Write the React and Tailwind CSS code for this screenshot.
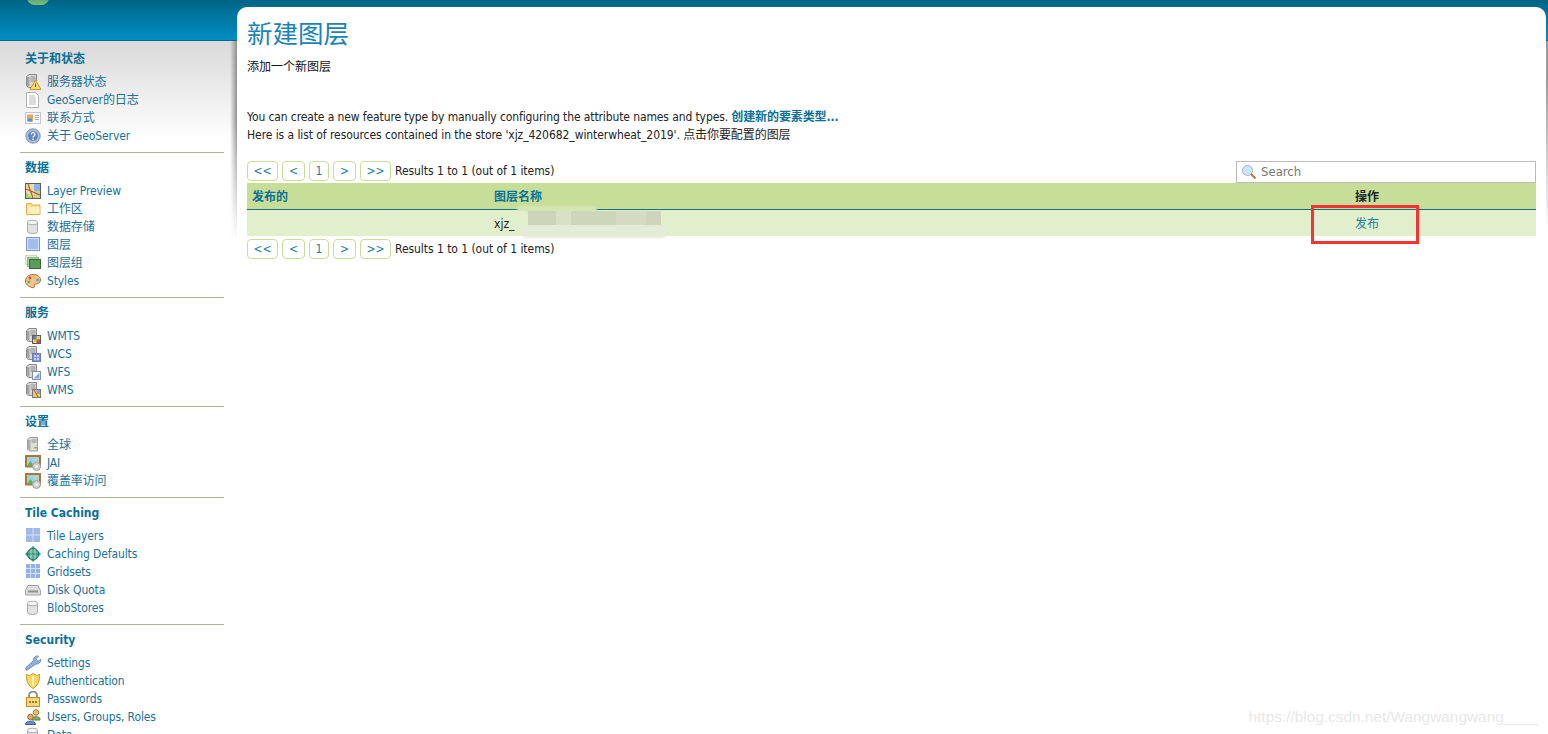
import React from 'react';

const FONT = 'font-["DejaVu_Sans_Condensed","Noto_Sans_CJK_SC",sans-serif]';

// --- little 16px icons ---
function Svg({ children }) {
  return <svg width="16" height="16" viewBox="0 0 16 16" className="shrink-0">{children}</svg>;
}

const Server = () => (
  <g>
    <path d="M1.5 2.5 4 .5h7.5v13h-8l-2-1.500z" fill="#dadada" stroke="#8a8a8a" />
    <path d="M2 3h2.5v10L2 11.500z" fill="#a4a4a4" />
    <path d="M5.500 3h5M5.500 5h5M5.500 7h5" stroke="#8d8d8d" />
  </g>
);

const ICONS = {
  status: (
    <Svg>
      <Server />
      <path d="M10.5 6 L16 15.5 H5 Z" fill="#fbd96b" stroke="#c79a2c" />
      <path d="M10.5 9.5v3.5" stroke="#7a4d00" />
    </Svg>
  ),
  log: (
    <Svg>
      <path d="M1.5.5h9l3 3v12h-12z" fill="#fff" stroke="#b0b0b0" />
      <path d="M4 4h6M4 6h7M4 8h7M4 10h7M4 12h7" stroke="#b8b8b8" />
    </Svg>
  ),
  contact: (
    <Svg>
      <rect x="0.5" y="2.5" width="15" height="11" fill="#f4f6fa" stroke="#c2c8d2" />
      <rect x="2" y="4.5" width="6" height="7" fill="#e4a868" />
      <rect x="3" y="8.5" width="4" height="3" fill="#5a8ed0" />
      <path d="M10 5.5h4M10 7.5h4M10 9.5h4" stroke="#a6adb8" />
    </Svg>
  ),
  about: (
    <Svg>
      <circle cx="8" cy="8" r="7.2" fill="#a5bde0" stroke="#7d98c4" />
      <circle cx="8" cy="8" r="4.8" fill="#5f83c0" />
      <path d="M6.3 6.5a1.8 1.8 0 1 1 2.6 1.6c-.6.3-.9.6-.9 1.3M8 10.6v1.4" stroke="#fff" strokeWidth="1.3" fill="none" />
    </Svg>
  ),
  preview: (
    <Svg>
      <rect x="0.5" y="0.5" width="15" height="15" fill="#dfe6a4" stroke="#5c5c5c" />
      <path d="M9 1h6v7H9z" fill="#8fb2ea" />
      <path d="M1 9l6 6H1z" fill="#a7cf7a" />
      <path d="M9 8h6v7H9z" fill="#bcd98a" />
      <path d="M3 1l5 14M1 6l14 6" stroke="#d8433a" strokeWidth="1.2" />
    </Svg>
  ),
  folder: (
    <Svg>
      <path d="M1.5 2.5h5l1 1.5h7.5v9.5H1.5z" fill="#fbe08a" stroke="#e0ad50" />
      <path d="M2.5 6h12v7h-12z" fill="#fdf0bd" />
    </Svg>
  ),
  store: (
    <Svg>
      <path d="M2.5 3.5v9c0 2.6 10 2.6 10 0v-9" fill="#e2e2e2" stroke="#a8a8a8" />
      <ellipse cx="7.5" cy="3.5" rx="5" ry="2.2" fill="#f6f6f6" stroke="#a8a8a8" />
    </Svg>
  ),
  layer: (
    <Svg>
      <rect x="1.5" y="0.5" width="13" height="13" fill="#a3bdea" stroke="#8196c0" />
      <rect x="2.5" y="1.5" width="11" height="11" fill="none" stroke="#d4dff3" />
    </Svg>
  ),
  group: (
    <Svg>
      <rect x="0.5" y="0.5" width="11" height="9" fill="#e4f1dc" stroke="#c6dfbd" />
      <rect x="2.5" y="2.5" width="11" height="9" fill="#a8cfa0" stroke="#8ab886" />
      <rect x="4.5" y="4.5" width="11" height="9" fill="#5e9a5c" stroke="#2f6d35" />
    </Svg>
  ),
  styles: (
    <Svg>
      <path d="M8 1.5c4.500 0 7.500 2.500 7.500 5.500 0 3-3 4-5 4-1.500 0-1.500 1.500-1 2.500.3 1-1 1.500-2.500 1C3 13.500.5 11 .5 8c0-3.500 3-6.500 7.500-6.500z" fill="#f0c48e" stroke="#a9713c" />
      <circle cx="5" cy="5" r="1.4" fill="#d9473b" />
      <circle cx="9" cy="4.5" r="1.4" fill="#efc23a" />
      <circle cx="12.5" cy="7" r="1.4" fill="#5c9ad8" />
      <circle cx="4" cy="9" r="1.4" fill="#6cb24e" />
    </Svg>
  ),
  wmts: (
    <Svg>
      <Server />
      <rect x="7.5" y="7.5" width="8" height="8" fill="#e8cf4f" stroke="#5d5d5d" />
      <path d="M8 8h3.5v3.5H8z" fill="#5a7fc9" />
      <path d="M11.5 11.5H15V15h-3.5z" fill="#c9503f" />
    </Svg>
  ),
  wcs: (
    <Svg>
      <Server />
      <rect x="7.5" y="7.5" width="8" height="8" fill="#7e94dc" stroke="#6a7bb8" />
      <path d="M9 9h2v2H9zM12 9h2v2h-2zM9 12h2v2H9zM12 12h2v2h-2z" fill="#c5d0f2" />
    </Svg>
  ),
  wfs: (
    <Svg>
      <Server />
      <rect x="7.5" y="7.5" width="8" height="8" fill="#fff" stroke="#7e8ea8" />
      <path d="M14.5 8.5v6h-6z" fill="#8aa5dc" />
    </Svg>
  ),
  wms: (
    <Svg>
      <Server />
      <rect x="7.5" y="7.5" width="8" height="8" fill="#e9d163" stroke="#777" />
      <path d="M11.5 8H15v4h-3.5z" fill="#86a8e0" />
      <path d="M9 8l4 7" stroke="#d8433a" />
    </Svg>
  ),
  global: (
    <Svg>
      <path d="M2.5 2.5 5 .5h7.5V14H5l-2.500-1.500z" fill="#dcdcdc" stroke="#9a9a9a" />
      <path d="M3 3h2.5v10L3 12z" fill="#aeaeae" />
      <path d="M6.500 3h5M6.500 5h5" stroke="#909090" />
      <rect x="9.5" y="10" width="2" height="1.5" fill="#4aa84a" />
    </Svg>
  ),
  jai: (
    <Svg>
      <rect x="1" y="1" width="14" height="10.5" fill="#9fd0ea" stroke="#a8793c" strokeWidth="2" />
      <path d="M2 11l3.500-5 3.500 5z" fill="#62ad55" />
      <circle cx="11" cy="4.5" r="1.3" fill="#f2d65b" />
      <circle cx="11.5" cy="11.5" r="4" fill="#cfcfcf" stroke="#a2a2a2" />
      <circle cx="11.5" cy="11.5" r="1.3" fill="#f4f4f4" />
    </Svg>
  ),
  tiles: (
    <Svg>
      <rect x="1" y="0" width="14" height="14" fill="#9db9e8" />
      <path d="M8 0v14M1 7h14" stroke="#d3dff5" />
    </Svg>
  ),
  globe: (
    <Svg>
      <path d="M8 0l8 8-8 8-8-8z" fill="#2f9f8e" />
      <circle cx="8" cy="8" r="5.6" fill="#8fc9a8" stroke="#1f7d78" />
      <path d="M8 2.500v11M2.500 8h11M5 3.500c-1.500 3-1.500 6 0 9M11 3.500c1.500 3 1.500 6 0 9" stroke="#1f7d78" fill="none" strokeWidth=".8" />
    </Svg>
  ),
  grid: (
    <Svg>
      <rect x="1" y="0" width="14" height="14" fill="#93b1e6" />
      <path d="M5.500 0v14M10.500 0v14M1 4.500h14M1 9.500h14" stroke="#d6e1f6" />
    </Svg>
  ),
  disk: (
    <Svg>
      <path d="M3 3.500h10l2.500 5v4.500H.5V8.500z" fill="#dcdcdc" stroke="#a2a2a2" />
      <rect x="3" y="8.500" width="10" height="2" fill="#8d8d8d" />
    </Svg>
  ),
  wrench: (
    <Svg>
      <path d="M1.500 15.500.5 13l8-7.500c-.5-2.500 1.500-5 5-4.500L11 3.500l.5 2 2 .5L16 4c.3 3-2.500 5.500-5 5z" fill="#8fb0e2" stroke="#5f7fb4" strokeWidth=".8" />
    </Svg>
  ),
  shield: (
    <Svg>
      <path d="M1.500 1.500l3 1L8 .5l3.500 2 3-1c.5 6-1.500 11-6.500 14C3 12.500 1 7.500 1.500 1.500z" fill="#f6d762" stroke="#c69a34" />
      <path d="M8 3v10" stroke="#fdf0b4" strokeWidth="2" />
    </Svg>
  ),
  lock: (
    <Svg>
      <path d="M4 7V4.500a4 4 0 0 1 8 0V7" fill="none" stroke="#8a8a8a" strokeWidth="1.8" />
      <rect x="1.5" y="6.5" width="13" height="9" fill="#f9d97c" stroke="#c98a22" />
      <path d="M4 10h2v2H4zM7 10h2v2H7zM10 10h2v2h-2z" fill="#a87a26" />
    </Svg>
  ),
  users: (
    <Svg>
      <circle cx="11" cy="3.5" r="2.8" fill="#eab877" stroke="#a9793a" />
      <path d="M7 10c0-3 8-3 8 0v1H7z" fill="#7eb35c" stroke="#4f8237" />
      <circle cx="5.5" cy="8" r="2.8" fill="#e7a76c" stroke="#a36a33" />
      <path d="M.5 15.500c0-4.500 10-4.500 10 0z" fill="#5f8fd4" stroke="#3a6099" />
    </Svg>
  ),
  data: (
    <Svg>
      <path d="M2.500 3.500v9c0 2.600 10 2.600 10 0v-9" fill="#e2e2e2" stroke="#a8a8a8" />
      <ellipse cx="7.5" cy="3.5" rx="5" ry="2.2" fill="#f6f6f6" stroke="#a8a8a8" />
      <circle cx="12.5" cy="12" r="2.5" fill="#f0c048" stroke="#b58a24" />
    </Svg>
  ),
};

const SECTIONS = [
  { title: '关于和状态', items: [['status', '服务器状态'], ['log', 'GeoServer的日志'], ['contact', '联系方式'], ['about', '关于 GeoServer']] },
  { title: '数据', items: [['preview', 'Layer Preview'], ['folder', '工作区'], ['store', '数据存储'], ['layer', '图层'], ['group', '图层组'], ['styles', 'Styles']] },
  { title: '服务', items: [['wmts', 'WMTS'], ['wcs', 'WCS'], ['wfs', 'WFS'], ['wms', 'WMS']] },
  { title: '设置', items: [['global', '全球'], ['jai', 'JAI'], ['jai', '覆盖率访问']] },
  { title: 'Tile Caching', items: [['tiles', 'Tile Layers'], ['globe', 'Caching Defaults'], ['grid', 'Gridsets'], ['disk', 'Disk Quota'], ['store', 'BlobStores']] },
  { title: 'Security', items: [['wrench', 'Settings'], ['shield', 'Authentication'], ['lock', 'Passwords'], ['users', 'Users, Groups, Roles'], ['data', 'Data']] },
];

function Section({ title, items, last }) {
  return (
    <div className={last ? 'pt-[7px]' : 'pt-[7px] pb-[7px] border-b border-[#a9b494]'}>
      <h3 className="px-[5px] h-[16px] leading-[16px] text-[12px] font-bold text-[#0a6f96]">{title}</h3>
      <ul className="mt-[6px]">
        {items.map(([icon, label]) => (
          <li key={label} className="h-[18px] flex items-center gap-[6px] pl-[5px] text-[12px] tracking-[-0.12px] text-[#1b6f96]">
            {ICONS[icon]}
            <span>{label}</span>
          </li>
        ))}
      </ul>
    </div>
  );
}

function Pager() {
  const btn = 'h-[20px] border border-[#c7de98] rounded-[4px] flex items-center justify-center text-[12px] text-[#1b7f9e] bg-white';
  return (
    <div className="flex items-center gap-[4px] h-[20px] text-[12px] tracking-[-0.05px] text-[#222]">
      <span className={`${btn} w-[31px]`}>&lt;&lt;</span>
      <span className={`${btn} w-[23px]`}>&lt;</span>
      <span className={`${btn} w-[20px]`}>1</span>
      <span className={`${btn} w-[23px]`}>&gt;</span>
      <span className={`${btn} w-[31px]`}>&gt;&gt;</span>
      <span>Results 1 to 1 (out of 1 items)</span>
    </div>
  );
}

export default function App() {
  return (
    <div className={`${FONT} relative h-[734px] overflow-hidden bg-white`}>
      <div className="h-[41px] bg-gradient-to-b from-[#006587] to-[#008fc4] border-b-[1px] border-[#00688c] relative">
        <div className="absolute left-[27px] -top-[10px] w-[22px] h-[15px] rounded-full bg-gradient-to-b from-[#1f7f9f] to-[#7cc06a]" />
      </div>
      <div className="flex">
        <aside className="relative w-[237px] shrink-0 h-[693px] bg-[linear-gradient(#d9d9d9,#ffffff_100px)] pl-[20px] pr-[13px] pt-[3px] overflow-hidden">
          {SECTIONS.map((s, i) => (
            <Section key={s.title} {...s} last={i === SECTIONS.length - 1} />
          ))}
          {/* shadow thrown by the content panel */}
          <div className="absolute right-0 top-0 w-[7px] h-[200px] bg-[linear-gradient(transparent_40%,#ffffff),linear-gradient(to_right,transparent,#8f8f8f)]" />
        </aside>
        <main className="flex-1 -mt-[34px] mr-[2px] bg-white rounded-t-[10px] pl-[10px] pr-[10px] relative">
          <h1 className="mt-[10px] h-[34px] leading-[34px] text-[25.5px] text-[#1b84b4]">新建图层</h1>
          <p className="mt-[7px] h-[18px] leading-[18px] text-[12px] text-[#111]">添加一个新图层</p>
          <p className="mt-[32px] h-[18px] leading-[18px] text-[12px] tracking-[-0.11px] text-[#222]">
            You can create a new feature type by manually configuring the attribute names and types.{' '}
            <span className="font-bold text-[#0a7096]">创建新的要素类型...</span>
          </p>
          <p className="h-[18px] leading-[18px] text-[12px] tracking-[-0.07px] text-[#222]">
            Here is a list of resources contained in the store 'xjz_420682_winterwheat_2019'. 点击你要配置的图层
          </p>
          <div className="mt-[17px] flex justify-between items-start h-[22px]">
            <Pager />
            <div className="w-[300px] h-[22px] border border-[#bbbbbb] flex items-center gap-[4px] pl-[4px] text-[13px] text-[#777]">
              <svg width="16" height="16" viewBox="0 0 16 16">
                <circle cx="6.5" cy="6.5" r="5" fill="#cfe2f6" stroke="#9db9d8" />
                <path d="M10 10l4.500 4.500" stroke="#b57a3e" strokeWidth="2.2" />
              </svg>
              <span>Search</span>
            </div>
          </div>
          <table className="w-full table-fixed border-collapse text-[12px]">
            <thead>
              <tr className="h-[26px] bg-[#c7de98] border-b border-[#0f6f85] text-left">
                <th className="w-[242px] pl-[5px] pt-[2px] font-bold text-[#0a7096]">发布的</th>
                <th className="pl-[5px] pt-[2px] font-bold text-[#0a7096]">图层名称</th>
                <th className="w-[181px] pt-[2px] font-bold text-[#222]">操作</th>
              </tr>
            </thead>
            <tbody>
              <tr className="h-[27px] bg-[#e2efcc]">
                <td />
                <td className="pl-[5px] pt-[2px] text-[#222]">xjz_</td>
                <td className="pt-[2px] text-[#1b7f9e]">发布</td>
              </tr>
            </tbody>
          </table>
          <div className="mt-[3px]">
            <Pager />
          </div>

          {/* smudge that hides the layer name */}
          <div className="absolute left-[280px] top-[199px] w-[80px] h-[6px] rounded-full bg-[#d4e5b4] blur-[1px]" />
          <div className="absolute left-[283px] top-[218px] w-[148px] h-[13px] rounded-full bg-[#e4ebd6] blur-[1px]" />
          <div className="absolute left-[280px] top-[204px] w-[10px] h-[14px] bg-[#e2efcc] blur-[1px]" />
          <div className="absolute left-[291px] top-[204px] flex h-[14px] blur-[0.5px]">
            <div className="w-[28px] bg-[#cbd5b9]" />
            <div className="w-[15px] bg-[#d8e1c6]" />
            <div className="w-[45px] bg-[#ccd6bb]" />
            <div className="w-[30px] bg-[#d3dcc3]" />
            <div className="w-[15px] bg-[#cdd5bd]" />
          </div>

          {/* red annotation box */}
          <div className="absolute left-[1074px] top-[198px] w-[108px] h-[39px] border-[3px] border-[#f53333]" />
        </main>
        {/* thin shadow on the far right edge */}
        <div className="absolute right-0 top-[41px] w-[2px] h-[190px] bg-[linear-gradient(#9a9a9a_20%,#ffffff)]" />
      </div>
      <div className="absolute right-[10px] bottom-[6px] font-['Liberation_Sans',sans-serif] text-[15.4px] text-[#e8e8e8]">
        https://blog.csdn.net/Wangwangwang____
      </div>
    </div>
  );
}
